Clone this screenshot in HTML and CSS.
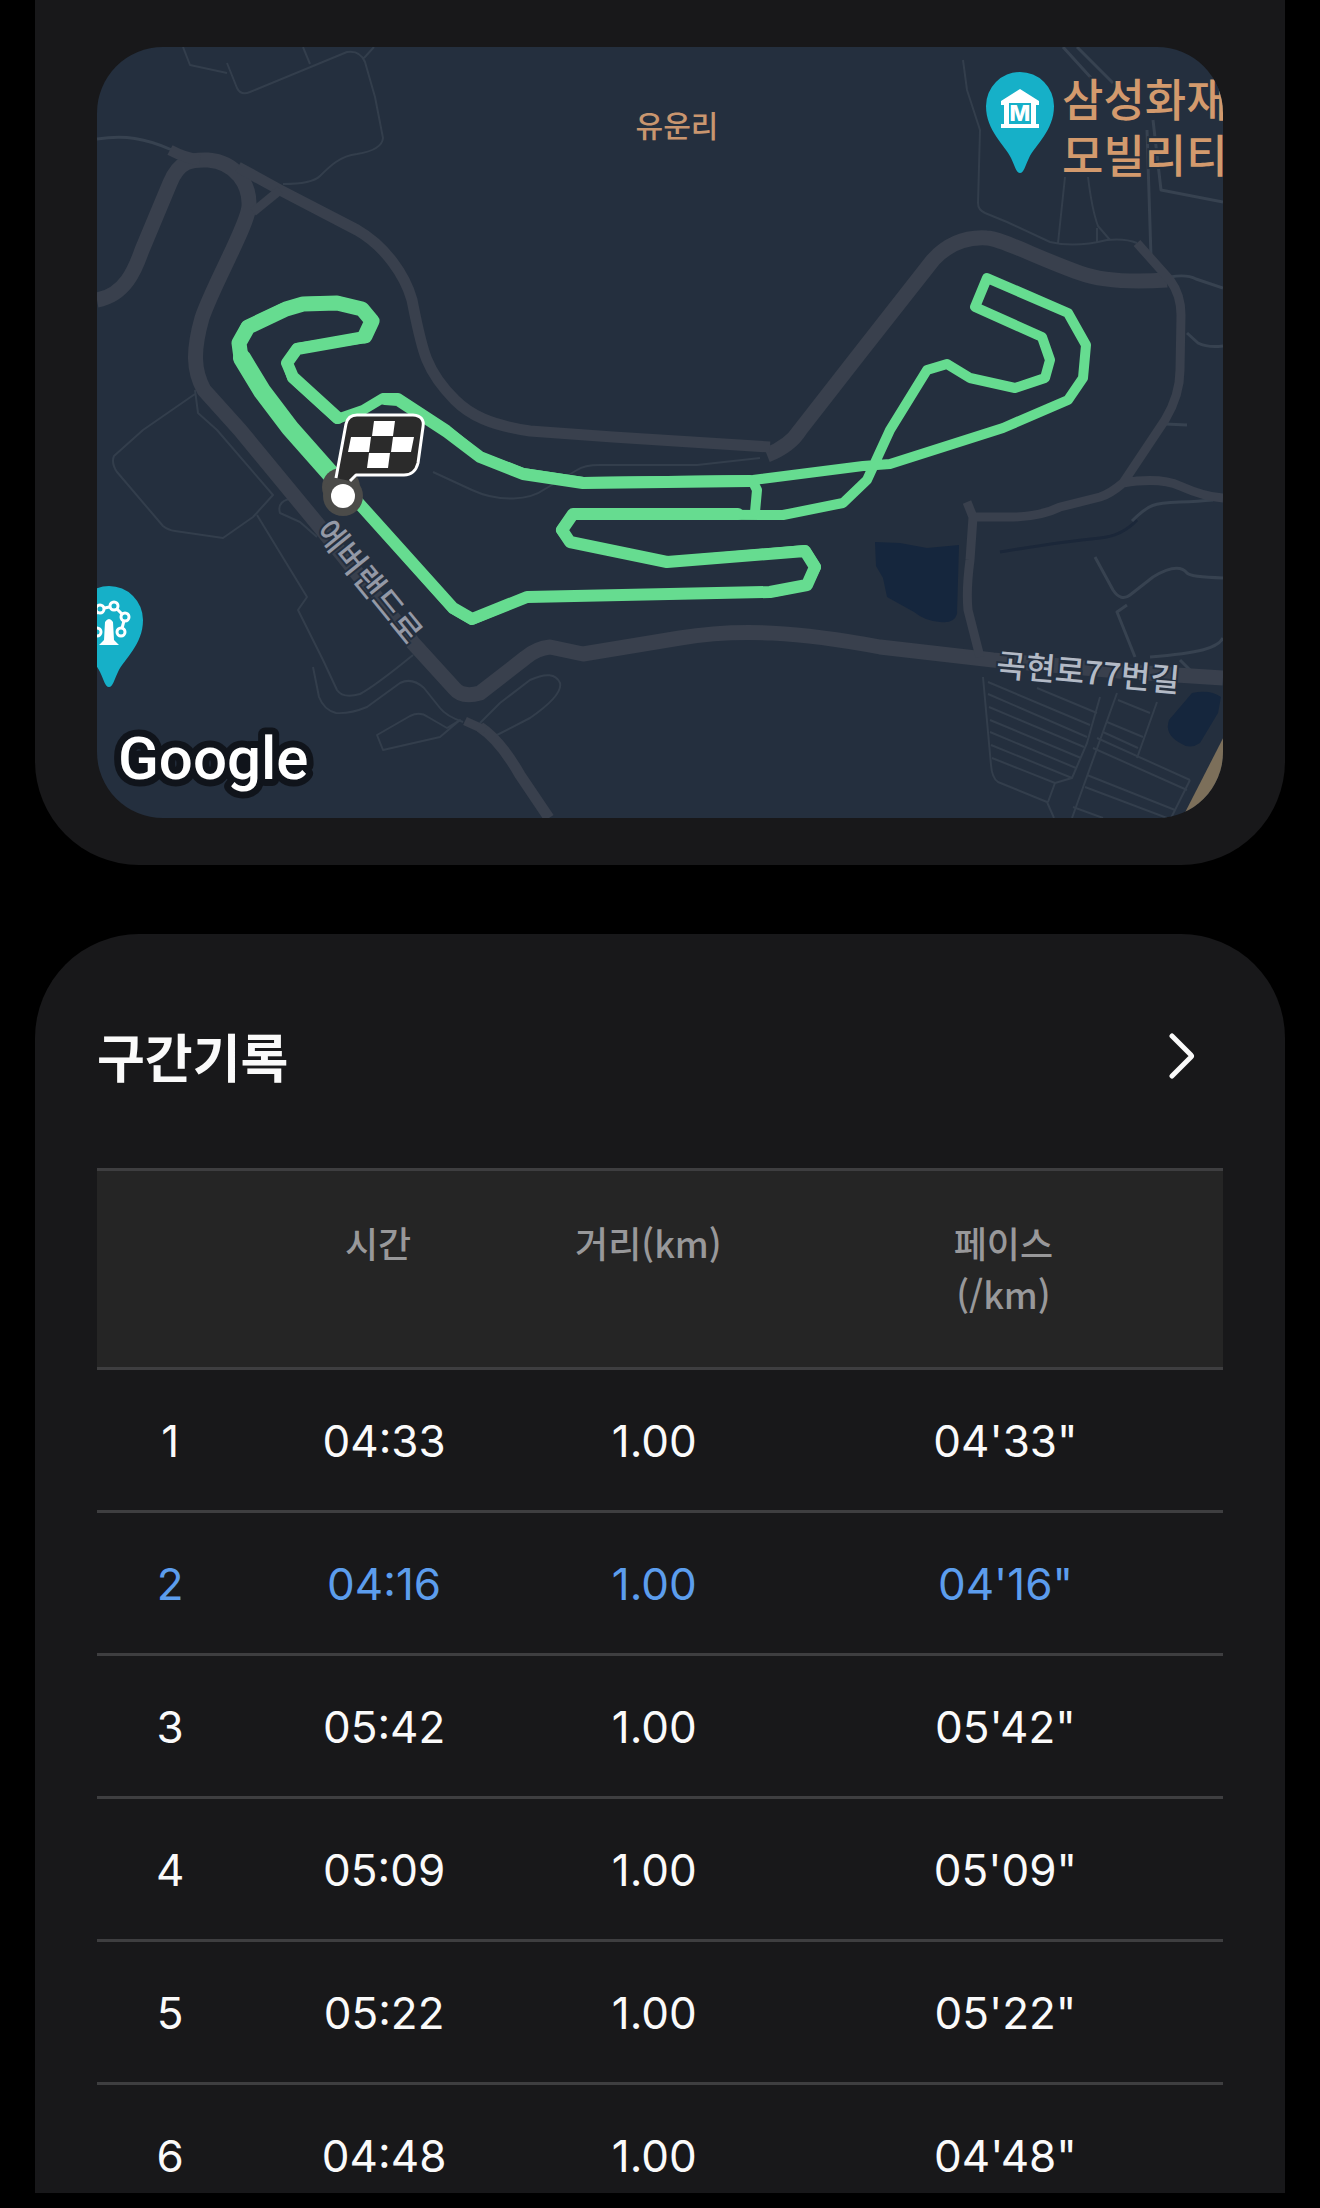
FILE: index.html
```html
<!DOCTYPE html>
<html lang="ko">
<head>
    <meta charset="UTF-8">
    <meta name="viewport" content="width=device-width, initial-scale=1.0">
    <title>구간기록</title>
    <link rel="stylesheet" href="styles.css">
</head>
<body>
    <main class="page">
        <section class="card map-card">
            <svg class="map" viewBox="97 47 1126 771" role="img" aria-label="운동 경로 지도">
                <defs>
                    <path id="pin" d="M0 67 C-4 67 -5 60 -9 52 C-15 39 -34 25 -34 0 A34 34 0 0 1 34 0 C34 25 15 39 9 52 C5 60 4 67 0 67 Z"/>
                </defs>

                <!-- Water -->
                <g class="water">
                    <path d="M875 542 L900 543 L927 548 L959 545 L957 614 Q954 624 940 622 Q925 621 914 612 L887 597 L883 578 L876 566 Z"/>
                    <path d="M1192 693 Q1210 689 1221 697 L1218 713 L1200 743 Q1190 750 1180 743 Q1164 734 1169 720 Z"/>
                    <path class="stream" d="M1000 552 Q1060 542 1100 538 Q1122 536 1137 520"/>
                </g>

                <!-- Small roads -->
                <g class="road-thin">
                    <path d="M183 47 L190 65 L227 73 M227 63 L237 88 Q241 96 250 92 L347 52 Q360 50 365 62 L375 97 L383 138 Q382 150 357 154 C340 156 330 166 320 176 Q312 184 283 184 M303 47 L310 64 M374 47 L364 58"/>
                    <path class="mid" d="M97 139 C125 135 145 138 172 150"/>
                    <path d="M195 394 L143 430 L114 456 Q111 463 117 472 L163 526 Q168 530 175 531 L223 538 L253 517 L273 495 L217 430 L198 413 L195 390"/>
                    <path d="M257 515 L307 597 L298 610 L323 660 L337 690 Q343 699 360 694 Q375 686 413 655"/>
                    <path d="M295 498 Q276 500 280 513 L300 522 L317 537 M313 667 L319 697 Q324 710 336 713 Q350 714 367 707 L400 683 Q412 677 424 688 L440 708 Q446 716 463 722"/>
                    <path d="M377 735 L410 716 Q420 711 428 717 L447 728 L460 720 L440 737 L383 750 Z"/>
                    <path d="M433 472 L472 490 C500 503 530 500 545 489 L577 470 Q584 465 600 465 L697 465 L760 458"/>
                    <path d="M480 723 L500 703 L530 680 Q554 669 560 683 Q563 695 530 718 L493 737"/>
                    <path d="M963 60 L967 90 L980 130 L978 203 Q978 210 985 213 L1007 222 L1050 242 Q1075 248 1107 240 Q1125 238 1137 243 M1065 177 L1058 243 M1088 177 Q1092 210 1098 226 L1110 240 M1097 228 L1097 243"/>
                    <path class="mid" d="M1147 130 L1151 257 M1063 47 L1093 80 M1077 47 L1113 83 M1153 120 L1161 190 L1223 202 M1170 277 Q1187 274 1196 279 L1223 288 M1187 333 L1198 343 Q1208 348 1223 346 M1165 424 L1187 425"/>
                    <path class="mid" d="M1095 557 L1113 590 Q1121 602 1130 595 L1153 577 Q1178 562 1187 573 Q1190 577 1223 578 M1127 605 L1117 612 L1135 657 M1150 657 C1200 653 1218 648 1223 638 M1180 660 L1193 673 M1213 500 C1155 505 1155 498 1132 521"/>
                    <!-- Parking lots -->
                    <path d="M983 677 L991 765 Q992 778 998 782 L1047 802 L1054 818 M1100 697 L1087 743 L1072 778 L1055 783 L1048 802 M1117 693 L1072 818 M1157 702 L1137 758 M1190 780 L1171 818"/>
                    <path d="M988 682 L1090 725 M988 694 L1087 737 M989 707 L1084 747 M990 720 L1081 758 M990 732 L1076 768 M991 745 L1072 778 M992 758 L1055 783 M1037 688 L1097 713"/>
                    <path d="M1118 700 L1150 713 M1107 722 L1143 737 M1103 732 L1138 748 M1097 738 L1190 780 M1093 748 L1187 790 M1087 775 L1175 810 M1085 787 L1167 818 M1073 807 L1103 818"/>
                </g>

                <!-- Main roads -->
                <g class="road">
                    <path d="M97 300 C125 295 135 270 142 250 L170 183 C180 158 195 160 208 160 C236 162 250 185 249 206 C248 225 213 285 202 318 C193 350 193 370 204 390 L240 430 L320 527 L413 643 L454 688 Q462 698 480 693 L525 658 Q537 648 550 647 L583 654 L680 638 C740 628 800 632 880 647 L993 660 L1130 672 L1223 678"/>
                    <path d="M767 455 Q790 446 800 430 L860 353 L933 260 Q955 236 987 238 C1000 238 1040 259 1080 273 Q1110 284 1167 280"/>
                </g>
                <g class="road-mid">
                    <path d="M170 150 Q185 158 200 160 M238 167 L280 190 L357 230 C385 246 405 275 412 300 C422 350 425 370 455 400 C470 415 490 425 530 431 L613 437 L770 447"/>
                    <path class="narrow" d="M253 212 L280 190"/>
                    <path d="M480 727 Q500 740 520 775 L549 818"/>
                    <path class="narrow" d="M465 721 L485 730"/>
                    <path class="narrow" d="M1137 243 L1170 280 Q1181 295 1181 315 L1180 370 Q1180 395 1165 420 L1123 483 Q1110 494 1100 497 L1060 507 Q1040 517 1010 517 L973 517 L967 502 M973 517 L970 560 Q966 590 968 610 L980 657 M1123 483 Q1160 477 1180 486 Q1205 497 1223 498"/>
                </g>
                <path class="highway" d="M1232 736 L1186 826"/>

                <!-- Running track -->
                <g class="track">
                    <path d="M343 493 L290 430 L253 380 L240 358 L238 342 L246 326 L283 308 L303 302 L337 301 L360 307 L373 321 L365 338 L297 348 L287 363 L292 378 L337 419 L363 410 L383 398 L398 398 L447 430 L480 457 L523 473 L583 482 L753 480 L863 466 L890 464 L1003 428 L1068 400 L1083 378 L1086 345 L1068 313 L987 278 L975 307 L1042 337 L1050 360 L1045 378 L1015 388 L970 378 L947 364 L927 370 L890 430 L867 480 L843 503 L783 515 L573 514 L561 530 L570 542 L667 562 L805 550 L816 567 L807 585 L773 592 L527 597 L472 620 L453 609 L355 499"/>
                    <path d="M753 482 L757 490 L755 512"/>
                    <path class="wide" d="M365 337 L297 349 L287 363 L293 377 L338 418 M385 399 L398 400 L447 432 L480 457 L523 474 L583 483 L750 481 M738 514 L573 514 L562 530 L570 542 L667 562 L805 551 L815 567 L807 585 L770 592 L527 597 L472 619 L453 608 L355 499"/>
                    <path class="wider" d="M241 358 L239 343 L248 327 L286 309 L303 304 L337 303 L362 309 L372 321 L365 336"/>
                    <path class="widest" d="M242 358 L262 391 L290 428 L336 480"/>
                </g>

                <!-- Start and finish -->
                <circle class="ring" cx="341" cy="487" r="19"/>
                <circle class="ring" cx="343" cy="496" r="20"/>
                <path class="flag" d="M336 478 L346 424 Q348 415 357 415 L413 415 Q425 416 423 427 L418 463 Q415 475 404 475 L356 475 L350 481"/>
                <path class="white" d="M374 421 h21 l-2 15 h-21 Z M351 437 h20 l-2 15 h-21 Z M393 437 h21 l-3 15 h-20 Z M369 453 h21 l-2 15 h-21 Z"/>
                <circle class="white" cx="343" cy="496" r="12"/>

                <!-- Places -->
                <use class="pin" href="#pin" x="1020" y="106"/>
                <path class="white" d="M1001 101 L1020 89 L1039 101 V105 H1036 V124 H1039 V128 H1001 V124 H1004 V105 H1001 Z"/>
                <path class="pin" d="M1009 103 H1031 V124 H1009 Z"/>
                <text class="pin-letter" x="1020" y="121">M</text>
                <use class="pin" href="#pin" x="109" y="620"/>
                <path class="wheel" d="M97 632 L93 617 L100 609 L114 606 L125 617 L121 632"/>
                <g class="pin wheel">
                    <circle cx="97" cy="632" r="4"/>
                    <circle cx="100" cy="609" r="4"/>
                    <circle cx="114" cy="606" r="4"/>
                    <circle cx="125" cy="617" r="4"/>
                    <circle cx="121" cy="632" r="4"/>
                </g>
                <path class="white" d="M105 622 Q109 616 113 622 L114 640 L119 645 H99 L104 640 Z"/>

                <text class="label town" x="677" y="137">유운리</text>
                <text class="label poi" x="1062" y="117">삼성화재</text>
                <text class="label poi" x="1062" y="173">모빌리티</text>
                <text class="label street" transform="translate(369 582) rotate(51)" y="11">에버랜드로</text>
                <text class="label street light" transform="translate(1088 673) rotate(5)" y="11">곡현로77번길</text>
                <text class="google" x="118" y="779">Google</text>
            </svg>
        </section>

        <section class="card laps-card">
            <div class="card-header">
                <h2>구간기록</h2>
                <button type="button" class="more" aria-label="더보기">
                    <svg viewBox="0 0 26 46" width="26" height="46">
                        <path d="M3 3 L22 22 Q23 23 22 24 L3 43"/>
                    </svg>
                </button>
            </div>
            <table class="laps">
                <thead>
                    <tr>
                        <th class="col-no"></th>
                        <th class="col-time">시간</th>
                        <th class="col-distance">거리(km)</th>
                        <th class="col-pace">페이스<br>(/km)</th>
                    </tr>
                </thead>
                <tbody>
                    <tr><td>1</td><td>04:33</td><td>1.00</td><td>04'33"</td></tr>
                    <tr class="best"><td>2</td><td>04:16</td><td>1.00</td><td>04'16"</td></tr>
                    <tr><td>3</td><td>05:42</td><td>1.00</td><td>05'42"</td></tr>
                    <tr><td>4</td><td>05:09</td><td>1.00</td><td>05'09"</td></tr>
                    <tr><td>5</td><td>05:22</td><td>1.00</td><td>05'22"</td></tr>
                    <tr><td>6</td><td>04:48</td><td>1.00</td><td>04'48"</td></tr>
                </tbody>
            </table>
        </section>
    </main>
</body>
</html>
```
FILE: styles.css
```css
* {
    box-sizing: border-box;
}

body {
    margin: 0;
    background-color: #000;
    color: #fafafa;
    font-family: Inter, "Noto Sans CJK KR", sans-serif;
}

.page {
    display: flex;
    flex-direction: column;
    gap: 69px;
    padding: 0 35px 16px;
}

.card {
    background-color: #18181a;
    padding: 0 62px;
}

.map-card {
    padding-top: 47px;
    padding-bottom: 47px;
    border-radius: 0 0 104px 104px;
}

.laps-card {
    padding-top: 84px;
    border-radius: 104px 104px 0 0;
}

/* Map */
.map {
    display: block;
    width: 100%;
    height: auto;
    border-radius: 66px;
    background-color: #242f3e;
    overflow: hidden;
}

.map path {
    stroke-linejoin: round;
}

.water {
    fill: #15263d;
}

.stream {
    fill: none;
    stroke: #1b2739;
    stroke-width: 3;
}

.road-thin {
    fill: none;
    stroke: #333e4c;
    stroke-width: 2;
}

.road-thin .mid {
    stroke: #374250;
    stroke-width: 3;
}

.road {
    fill: none;
    stroke: #39404d;
    stroke-width: 15;
}

.road-mid {
    fill: none;
    stroke: #39404d;
    stroke-width: 11;
}

.road-mid .narrow {
    stroke-width: 9;
}

.highway {
    fill: none;
    stroke: #7c6f5a;
    stroke-width: 14;
}

.track {
    fill: none;
    stroke: #66dc90;
    stroke-width: 10;
    stroke-linecap: round;
}

.track .wide {
    stroke-width: 12;
}

.track .wider {
    stroke-width: 15;
}

.track .widest {
    stroke-width: 18;
}

.ring {
    fill: #4b4b49;
}

.flag {
    fill: #2b2b2b;
    stroke: #fff;
    stroke-width: 3;
}

.white {
    fill: #fff;
}

.pin {
    fill: #16b0c8;
}

.pin-letter {
    fill: #fff;
    font-size: 22px;
    font-weight: 800;
    text-anchor: middle;
}

.wheel {
    stroke: #fff;
    stroke-width: 3;
}

path.wheel {
    fill: none;
}

.label {
    font-family: "Noto Sans CJK KR", sans-serif;
    font-weight: 500;
    paint-order: stroke;
    stroke: #242f3e;
    stroke-width: 4;
}

.town {
    fill: #c9966f;
    font-size: 30px;
    text-anchor: middle;
}

.poi {
    fill: #d39a6d;
    font-size: 45px;
}

.street {
    fill: #9499a6;
    font-size: 32px;
    text-anchor: middle;
}

.street.light {
    fill: #b3bac6;
}

.google {
    fill: #fff;
    stroke: #10141b;
    stroke-width: 14;
    stroke-linejoin: round;
    paint-order: stroke;
    font-family: Roboto, sans-serif;
    font-size: 60px;
    font-weight: 500;
}

/* Lap records */
.card-header {
    display: flex;
    justify-content: space-between;
    align-items: center;
    margin-bottom: 74px;
}

h2 {
    margin: 0;
    font-family: "Noto Sans CJK KR", sans-serif;
    font-size: 52px;
    font-weight: 700;
    line-height: 76px;
}

.more {
    display: flex;
    padding: 0 28px;
    border: none;
    background: none;
    cursor: pointer;
}

.more path {
    fill: none;
    stroke: #fafafa;
    stroke-width: 5;
    stroke-linecap: round;
}

.laps {
    width: 100%;
    table-layout: fixed;
    border-collapse: separate;
    border-spacing: 0;
    text-align: center;
}

th {
    padding: 46px 12px 48px 0;
    border-top: 3px solid #3e3e40;
    border-bottom: 3px solid #3e3e40;
    background-color: #252525;
    color: #98989a;
    font-family: "Noto Sans CJK KR", sans-serif;
    font-size: 36px;
    font-weight: 500;
    line-height: 51px;
    vertical-align: top;
}

td {
    padding: 41px 0 39px;
    border-bottom: 3px solid #3e3e40;
    font-size: 44px;
    line-height: 60px;
}

th:last-child {
    padding-right: 0;
}

td:last-child {
    padding-left: 4px;
}

tr:last-child td {
    padding-bottom: 7px;
    border-bottom: none;
}

.best {
    color: #5c9ded;
}

.col-no {
    width: 13%;
}

.col-time {
    width: 25%;
}

.col-distance {
    width: 23%;
}

.col-pace {
    width: 39%;
}
```
